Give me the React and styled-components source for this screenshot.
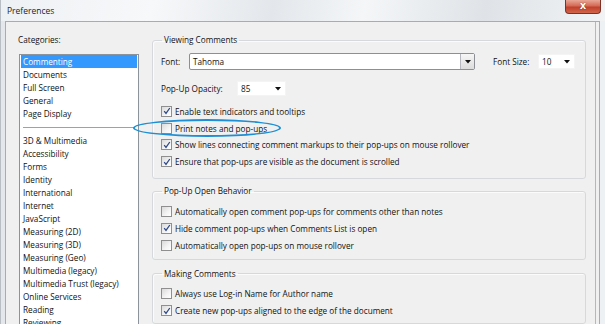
import React from "react";
import styled, { createGlobalStyle } from "styled-components";

const GlobalStyle = createGlobalStyle`
  html, body {
    margin: 0;
    padding: 0;
    background: #ffffff;
  }
  body {
    font-family: "Open Sans", "Noto Sans", sans-serif;
    font-size: 8.2px;
    color: #111111;
  }
`;

const categoriesTop = ["Commenting", "Documents", "Full Screen", "General", "Page Display"];
const categoriesRest = [
  "3D & Multimedia",
  "Accessibility",
  "Forms",
  "Identity",
  "International",
  "Internet",
  "JavaScript",
  "Measuring (2D)",
  "Measuring (3D)",
  "Measuring (Geo)",
  "Multimedia (legacy)",
  "Multimedia Trust (legacy)",
  "Online Services",
  "Reading",
  "Reviewing",
];

const Check = ({ checked }) => (
  <CheckBox>
    {checked && (
      <svg width="8" height="8" viewBox="0 0 8 8">
        <path d="M1.2 4.2 L3 6.4 L6.8 1" fill="none" stroke="#2f4a8a" strokeWidth="1.3" />
      </svg>
    )}
  </CheckBox>
);

const Arrow = () => (
  <svg width="6" height="4" viewBox="0 0 6 4">
    <path d="M0 0 H6 L3 3.5 Z" fill="#111" />
  </svg>
);

const Option = ({ checked, children, circled }) => (
  <OptionRow>
    <Check checked={checked} />
    <span>{children}</span>
    {circled && <Circle />}
  </OptionRow>
);

export default function App() {
  return (
    <>
      <GlobalStyle />
      <Window>
        <TitleBar>
          <Title>Preferences</Title>
          <CloseButton>x</CloseButton>
        </TitleBar>
        <Frame>
          <LeftColumn>
            <Label>Categories:</Label>
            <ListBox>
              {categoriesTop.map((c, i) => (
                <ListItem key={c} selected={i === 0}>
                  {c}
                </ListItem>
              ))}
              <ListSeparator />
              {categoriesRest.map((c) => (
                <ListItem key={c}>{c}</ListItem>
              ))}
            </ListBox>
          </LeftColumn>
          <RightColumn>
            <Group pb={8}>
              <Legend>Viewing Comments</Legend>
              <FieldRow>
                <FieldLabel width={28}>Font:</FieldLabel>
                <Combo>
                  <ComboText>Tahoma</ComboText>
                  <ComboButton>
                    <Arrow />
                  </ComboButton>
                </Combo>
                <FieldLabel width={45} style={{ marginLeft: 18 }}>
                  Font Size:
                </FieldLabel>
                <PlainSelect width={37}>
                  <span>10</span>
                  <Arrow />
                </PlainSelect>
              </FieldRow>
              <FieldRow gap={10}>
                <FieldLabel width={76}>Pop-Up Opacity:</FieldLabel>
                <PlainSelect width={49}>
                  <span>85</span>
                  <Arrow />
                </PlainSelect>
              </FieldRow>
              <Options top={6}>
                <Option checked>Enable text indicators and tooltips</Option>
                <Option circled>Print notes and pop-ups</Option>
                <Option checked>
                  Show lines connecting comment markups to their pop-ups on mouse rollover
                </Option>
                <Option checked>Ensure that pop-ups are visible as the document is scrolled</Option>
              </Options>
            </Group>
            <Group pb={5}>
              <Legend>Pop-Up Open Behavior</Legend>
              <Options top={6}>
                <Option>Automatically open comment pop-ups for comments other than notes</Option>
                <Option checked>Hide comment pop-ups when Comments List is open</Option>
                <Option>Automatically open pop-ups on mouse rollover</Option>
              </Options>
            </Group>
            <Group pb={4} style={{ marginTop: 2 }}>
              <Legend>Making Comments</Legend>
              <Options top={6}>
                <Option>Always use Log-in Name for Author name</Option>
                <Option checked>Create new pop-ups aligned to the edge of the document</Option>
              </Options>
            </Group>
          </RightColumn>
        </Frame>
      </Window>
    </>
  );
}

const Window = styled.div`
  width: 605px;
  height: 324px;
  overflow: hidden;
  display: flex;
  flex-direction: column;
  background: linear-gradient(90deg, #e4e8ec 0%, #eef1f4 100%);
  border-left: 1px solid #b9bec4;
  box-sizing: border-box;
`;

const TitleBar = styled.div`
  height: 21px;
  flex: none;
  display: flex;
  justify-content: space-between;
  align-items: flex-start;
  padding-left: 6px;
  padding-right: 4px;
  background: linear-gradient(
    100deg,
    #eef1f4 0%,
    #f7f8fa 25%,
    #e3e7eb 45%,
    #f4f6f8 60%,
    #dfe3e7 80%,
    #f1f3f5 100%
  );
`;

const Title = styled.div`
  padding-top: 5px;
  font-size: 8.5px;
  color: #1e1e1e;
`;

const CloseButton = styled.div`
  width: 36px;
  height: 14px;
  box-sizing: border-box;
  border: 1px solid #7a3328;
  border-top: none;
  border-radius: 0 0 4px 4px;
  background: linear-gradient(#e9a797 0%, #d56a56 45%, #c0402b 55%, #d2654c 100%);
  color: #ffffff;
  font-family: "DejaVu Sans", sans-serif;
  font-weight: bold;
  font-size: 10px;
  line-height: 11px;
  text-align: center;
  text-shadow: 0 0 1px #5a1a10;
`;

const Frame = styled.div`
  flex: 1;
  margin-left: 4px;
  width: 595px;
  box-sizing: border-box;
  border: 1px solid #a5acb5;
  border-bottom: none;
  background: #f0f0f0;
  display: flex;
  padding: 12px 0 0 12px;
  gap: 13px;
  box-shadow: inset -3px 0 0 #f0f0f0, inset -4px 0 0 #b4b8bd;
`;

const LeftColumn = styled.div`
  width: 121px;
  flex: none;
  display: flex;
  flex-direction: column;
`;

const Label = styled.div`
  height: 12px;
  line-height: 12px;
  margin-bottom: 8px;
`;

const ListBox = styled.div`
  margin-left: 1px;
  flex: 1;
  background: #ffffff;
  border: 1px solid #8d939b;
  border-bottom: none;
  padding: 0 1px;
  overflow: hidden;
`;

const ListItem = styled.div`
  height: 13px;
  line-height: 13px;
  padding-left: 2px;
  white-space: nowrap;
  background: ${(p) => (p.selected ? "#3399ff" : "transparent")};
  color: ${(p) => (p.selected ? "#ffffff" : "#111111")};
`;

const ListSeparator = styled.div`
  height: 14px;
  display: flex;
  align-items: center;
  padding: 0 2px;
  &::after {
    content: "";
    flex: 1;
    height: 1px;
    background: #7fa9d1;
  }
`;

const RightColumn = styled.div`
  width: 434px;
  flex: none;
  display: flex;
  flex-direction: column;
  gap: 6px;
`;

const Group = styled.fieldset`
  margin: 0;
  min-width: 0;
  border: 1px solid #d6d9dc;
  border-radius: 3px;
  box-shadow: inset 1px 1px 0 #fbfbfb;
  padding: 0 8px ${(p) => p.pb}px 8px;
`;

const Legend = styled.legend`
  padding: 0 2px;
  margin-left: 1px;
  height: 12px;
  line-height: 12px;
`;

const FieldRow = styled.div`
  display: flex;
  align-items: center;
  height: 17px;
  margin-top: ${(p) => p.gap ?? 7}px;
`;

const FieldLabel = styled.span`
  width: ${(p) => p.width}px;
  flex: none;
  white-space: nowrap;
`;

const Combo = styled.div`
  width: 286px;
  height: 17px;
  box-sizing: border-box;
  border: 1px solid #8c9096;
  border-radius: 2px;
  background: #ffffff;
  display: flex;
  align-items: stretch;
`;

const ComboText = styled.span`
  flex: 1;
  padding-left: 3px;
  line-height: 15px;
`;

const ComboButton = styled.span`
  width: 13px;
  border-left: 1px solid #b5b9bf;
  background: linear-gradient(#f6f6f6, #dcdcdc);
  display: flex;
  align-items: center;
  justify-content: center;
`;

const PlainSelect = styled.div`
  width: ${(p) => p.width}px;
  height: 15px;
  box-sizing: border-box;
  background: #ffffff;
  border: 1px solid #f4f4f4;
  display: flex;
  align-items: center;
  justify-content: space-between;
  padding: 0 4px 0 3px;
`;

const Options = styled.div`
  display: flex;
  flex-direction: column;
  margin-top: ${(p) => p.top}px;
`;

const OptionRow = styled.div`
  position: relative;
  height: 16.8px;
  display: flex;
  align-items: center;
  gap: 3px;
  white-space: nowrap;
`;

const CheckBox = styled.span`
  width: 9px;
  height: 9px;
  flex: none;
  border: 1px solid #8f8f8f;
  background: linear-gradient(135deg, #dadada 0%, #f4f4f4 60%, #ffffff 100%);
  display: flex;
  align-items: center;
  justify-content: center;
`;

const Circle = styled.span`
  position: absolute;
  left: -28px;
  top: -1px;
  width: 148px;
  height: 18px;
  box-sizing: border-box;
  border: 2.5px solid #1d8fd4;
  border-radius: 50%;
  z-index: 2;
  pointer-events: none;
`;
